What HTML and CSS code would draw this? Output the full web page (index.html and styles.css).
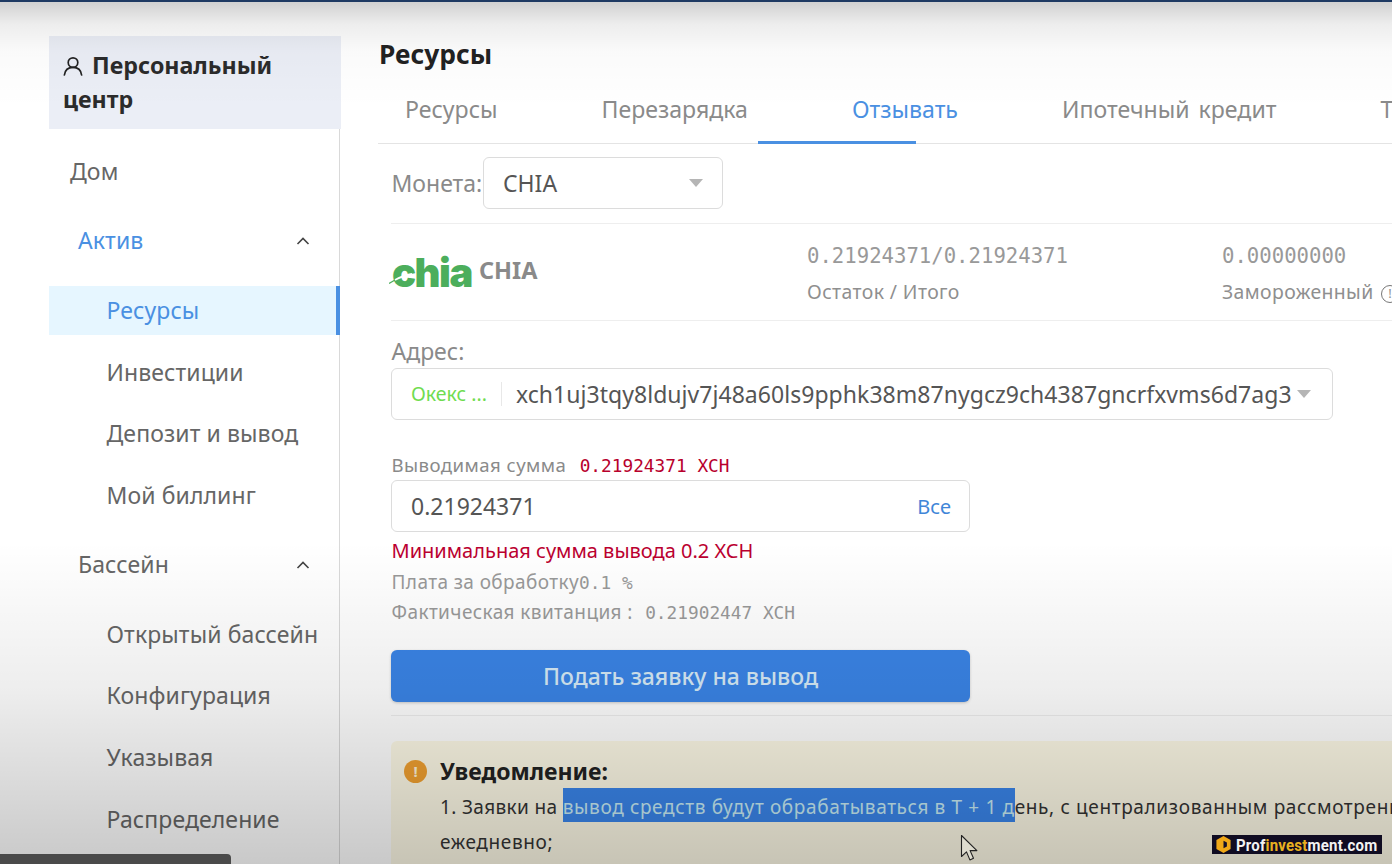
FILE: index.html
```html
<!DOCTYPE html>
<html lang="ru">
<head>
<meta charset="utf-8">
<title>Ресурсы</title>
<link rel="stylesheet" href="styles.css">
</head>
<body>
<div class="topline"></div>
<div class="page">
  <aside class="sidebar">
    <div class="side-head">
      <svg class="user-icon" viewBox="0 0 20 20" width="20" height="20"><circle cx="10" cy="6.6" r="4.8" fill="none" stroke="#222" stroke-width="1.7"/><path d="M1.4 19c.6-4.6 3.8-7.6 8.6-7.6s8 3 8.6 7.6" fill="none" stroke="#222" stroke-width="1.7" stroke-linecap="round"/></svg>
      Персональный центр
    </div>
    <nav class="nav">
      <div class="nav-top">Дом</div>
      <div class="nav-group active-group"><span>Актив</span><svg class="chev" viewBox="0 0 14 8" width="14" height="8"><path d="M1.5 7L7 1.5 12.5 7" fill="none" stroke="#444" stroke-width="1.6"/></svg></div>
      <div class="nav-item active">Ресурсы</div>
      <div class="nav-item">Инвестиции</div>
      <div class="nav-item">Депозит и вывод</div>
      <div class="nav-item">Мой биллинг</div>
      <div class="nav-group second"><span>Бассейн</span><svg class="chev" viewBox="0 0 14 8" width="14" height="8"><path d="M1.5 7L7 1.5 12.5 7" fill="none" stroke="#444" stroke-width="1.6"/></svg></div>
      <div class="nav-item first-sub">Открытый бассейн</div>
      <div class="nav-item">Конфигурация</div>
      <div class="nav-item">Указывая</div>
      <div class="nav-item">Распределение</div>
    </nav>
  </aside>
  <main class="main">
    <h1 class="title">Ресурсы</h1>
    <div class="tabs">
      <span class="tab">Ресурсы</span>
      <span class="tab">Перезарядка</span>
      <span class="tab tab-on">Отзывать</span>
      <span class="tab">Ипотечный кредит</span>
      <span class="tab">Трансфер</span>
      <i class="ink"></i>
    </div>
    <div class="content">
      <div class="coin-row">
        <label class="lab-lg">Монета:</label>
        <div class="select"><span>CHIA</span><i class="caret"></i></div>
      </div>
      <div class="info-row">
        <div class="logo">
          <span class="logo-word">chia</span>
          <svg class="leaf" viewBox="0 0 30 14" width="30" height="14"><path d="M0 13.5L6 10" fill="none" stroke="#4cae5c" stroke-width="1.2"/><path d="M6 10C11 7 15 5.500 23 4" fill="none" stroke="#fff" stroke-width="1.8"/></svg>
          <b class="logo-name">CHIA</b>
        </div>
        <div class="stat stat-a"><div class="num">0.21924371/0.21924371</div><div class="cap">Остаток / Итого</div></div>
        <div class="stat stat-b"><div class="num">0.00000000</div><div class="cap">Замороженный <i class="hint">!</i></div></div>
      </div>
      <div class="addr-block">
        <label class="lab-lg">Адрес:</label>
        <div class="addr">
          <span class="addr-tag">Окекс ...</span>
          <span class="addr-val">xch1uj3tqy8ldujv7j48a60ls9pphk38m87nygcz9ch4387gncrfxvms6d7ag3</span>
          <i class="caret"></i>
        </div>
      </div>
      <div class="amount-label">Выводимая сумма <span class="mono red">0.21924371 XCH</span></div>
      <div class="amount"><span>0.21924371</span><a class="all">Все</a></div>
      <div class="err">Минимальная сумма вывода 0.2 XCH</div>
      <div class="fee">Плата за обработку<span class="mono">0.1 %</span></div>
      <div class="fee fee2">Фактическая квитанция : <span class="mono gap-mono">0.21902447 XCH</span></div>
      <button class="submit">Подать заявку на вывод</button>
      <div class="notice">
        <div class="notice-head"><i class="warn">!</i><b>Уведомление:</b></div>
        <p class="notice-text"><span class="lead">1. Заявки на </span><span class="sel">вывод средств будут обрабатываться в Т + 1 д</span>ень, с централизованным рассмотрением<br>ежедневно;</p>
      </div>
    </div>
  </main>
</div>
<div class="shade"></div>
<div class="tipbar"></div>
<svg class="cursor" viewBox="0 0 20 28" width="20" height="28"><path d="M1.5 1.5v21l5-4.600 3.400 8 3.600-1.600-3.400-7.700h6.800z" fill="#dedccf" stroke="#222" stroke-width="1.1" stroke-linejoin="round"/></svg>
<div class="mark">
  <svg viewBox="0 0 18 20" width="17" height="19"><path d="M9 1l7.500 4.300v9.400L9 19l-7.500-4.300V5.300z" fill="#f0a818"/><path d="M9 6l3.600 2v4L9 14z" fill="#14102a"/></svg>
  <span>Prof<em>invest</em>ment.com</span>
</div>
</body>
</html>
```
FILE: styles.css
```css
* { box-sizing: border-box; }
html, body { margin: 0; padding: 0; }
body {
  width: 1392px;
  height: 864px;
  overflow: hidden;
  background: #fff;
  font-family: "Noto Sans", "Open Sans", sans-serif;
  color: #555;
  position: relative;
}
.topline { height: 2px; background: #1f3a63; }
.page { display: flex; height: 862px; padding-left: 49px; }

.sidebar { width: 292px; flex: none; margin-right: 37px; padding-top: 34px; display: flex; flex-direction: column; }
.side-head {
  height: 93px;
  background: #ebeef6;
  padding: 12px 14px;
  font-size: 23.2px;
  line-height: 34px;
  font-weight: 700;
  color: #2b2b2b;
}
.user-icon { vertical-align: -2px; margin-right: 3px; }
.nav { flex: 1; width: 291px; border-right: 1px solid #d9d9d9; font-size: 23px; color: #666; letter-spacing: .1px; }
.nav-top { height: 49px; line-height: 49px; padding-left: 21px; margin-top: 18px; }
.nav-group { height: 49px; display: flex; align-items: center; justify-content: space-between; padding: 0 29px; margin-top: 20px; }
.active-group { color: #4a90e2; margin-top: 19px; margin-bottom: 22px; }
.nav-group.second { margin-top: 20px; margin-bottom: 21px; }
.nav-item { height: 49px; line-height: 49px; padding-left: 57.5px; margin-bottom: 12.6px; }
.nav-item.active { color: #4a90e2; background: #e6f6ff; border-right: 4px solid #4a90e2; width: 291px; }
.chev { flex: none; margin-top: 2px; }

.main { flex: 1; min-width: 0; overflow: hidden; }
.title { margin: 0; font-size: 26.3px; line-height: 34px; padding: 35px 0 0 1px; font-weight: 700; color: #222; height: 70px; }
.tabs { position: relative; display: flex; gap: 104px; padding: 2px 0 0 27px; height: 72px; align-items: center; border-bottom: 1px solid #e4e4e4; font-size: 23.1px; word-spacing: 3px; color: #8a8a8a; white-space: nowrap; width: 1100px; }
.tab-on { color: #4a90e2; }
.ink { position: absolute; left: 380px; bottom: -1px; width: 158px; height: 3px; background: #4a90e2; }

.content { padding-left: 13px; width: 1100px; }
.coin-row { display: flex; align-items: center; height: 80px; border-bottom: 1px solid #eee; padding-bottom: 2px; }
.lab-lg { font-size: 23px; color: #8a8a8a; margin-left: .5px; width: 91.5px; flex: none; }
.select { width: 240px; height: 52px; border: 1px solid #dcdcdc; border-radius: 6px; display: flex; align-items: center; justify-content: space-between; padding: 0 19px; font-size: 23px; color: #555; }
.caret { display: block; width: 0; height: 0; border-left: 7px solid transparent; border-right: 7px solid transparent; border-top: 8px solid #b5b5b5; flex: none; }

.info-row { position: relative; height: 97px; border-bottom: 1px solid #eee; }
.logo { position: absolute; left: 1px; top: 27px; display: flex; align-items: flex-start; }
.logo-word { font-family: "Inter", sans-serif; font-weight: 900; font-size: 40px; line-height: 44px; letter-spacing: -1.5px; color: #4cae5c; width: 87px; }
.leaf { position: absolute; left: -3px; top: 19px; }
.logo-name { font-size: 23.5px; line-height: 32px; margin-top: 3px; color: #8a8a8a; }
.stat { position: absolute; top: 17px; }
.stat-a { left: 416px; }
.stat-b { left: 831px; white-space: nowrap; }
.num { font-family: "DejaVu Sans Mono", monospace; font-size: 20.65px; line-height: 30px; color: #999; }
.cap { font-size: 19.4px; line-height: 30px; margin-top: 6px; color: #8f8f8f; letter-spacing: .4px; }
.hint { display: inline-block; width: 18px; height: 18px; margin-left: 2px; border: 1.5px solid #777; border-radius: 50%; font-style: normal; font-size: 13px; line-height: 15px; text-align: center; vertical-align: 1px; }

.addr-block { padding-top: 14px; }
.addr-block .lab-lg { display: block; line-height: 32px; }
.addr { width: 942px; height: 52px; margin-top: 1px; border: 1px solid #dcdcdc; border-radius: 6px; display: flex; align-items: center; padding-left: 19px; }
.addr-tag { color: #6fdc50; font-size: 19.5px; width: 91px; border-right: 1px solid #e8e8e8; line-height: 24px; flex: none; white-space: nowrap; }
.addr-val { font-size: 23px; margin-left: 14px; white-space: nowrap; letter-spacing: .04px; }
.addr .caret { margin-left: 5px; }

.amount-label { margin: 32px 0 0 .5px; font-size: 18.6px; line-height: 25px; color: #8a8a8a; letter-spacing: .45px; }
.mono { font-family: "DejaVu Sans Mono", monospace; font-size: 17.8px; letter-spacing: 0; }
.red { color: #b8002c; margin-left: 8px; }
.gap-mono { margin-left: 7px; }
.amount { width: 579px; height: 52px; margin-top: 2px; border: 1px solid #dcdcdc; border-radius: 6px; display: flex; align-items: center; justify-content: space-between; padding: 0 18px 0 19px; font-size: 23px; color: #555; }
.all { font-size: 20px; color: #3f86d8; }
.err { margin: 6px 0 0 .5px; font-size: 20px; line-height: 26px; color: #bb0030; }
.fee { margin: 5px 0 0 .5px; font-size: 19px; line-height: 26px; color: #999; letter-spacing: .4px; }
.fee2 { margin-top: 3px; }
.submit { display: block; width: 579px; height: 52px; margin-top: 24px; border: 0; border-radius: 6px; background: #3a84e6; color: #d6eaf6; font: 500 23px "Noto Sans", sans-serif; box-shadow: 0 1px 3px rgba(0,0,0,.2); }

.notice { margin-top: 39px; padding: 13px 0 0 13px; width: 1100px; height: 200px; background: #fdf9e6; border-radius: 6px; position: relative; }
.notice::before { content: ""; position: absolute; left: 0; right: 0; top: -26px; height: 1px; background: #eee; }
.notice-head { display: flex; align-items: center; gap: 13px; font-size: 23px; line-height: 34px; color: #222; }
.warn { width: 23px; height: 23px; border-radius: 50%; background: #f0a030; color: #fff3d8; font-style: normal; font-size: 15px; font-weight: 700; line-height: 23px; text-align: center; }
.notice-text { margin: 2px 0 0 36px; font-size: 19px; line-height: 35px; color: #333; letter-spacing: .64px; white-space: nowrap; }
.lead { letter-spacing: .35px; }
.sel { background: #3a85ea; color: #c8ecf5; padding: 6px 0 2px; }

.shade {
  position: absolute; inset: 2px 0 0 0; pointer-events: none;
  background:
    linear-gradient(to bottom, rgba(0,0,0,.18) 0, rgba(0,0,0,.07) 22px, rgba(0,0,0,.02) 50px, rgba(0,0,0,0) 105px),
    linear-gradient(to bottom, rgba(0,0,0,0) 540px, rgba(0,0,0,.07) 690px, rgba(0,0,0,.21) 862px);
}
.tipbar { position: absolute; left: 0; bottom: 0; width: 231px; height: 10px; background: #4a4a4a; border-top-right-radius: 4px; }
.cursor { position: absolute; left: 960px; top: 834px; }
.mark { position: absolute; left: 1212px; top: 835px; width: 170px; height: 19px; background: #100c22; display: flex; align-items: center; gap: 4px; padding-left: 3px; }
.mark span { display: inline-block; transform: scaleY(1.15); font: 700 15px "Roboto", sans-serif; color: #f2f2f2; letter-spacing: .2px; white-space: nowrap; }
.mark em { font-style: normal; color: #e8b020; }
```
